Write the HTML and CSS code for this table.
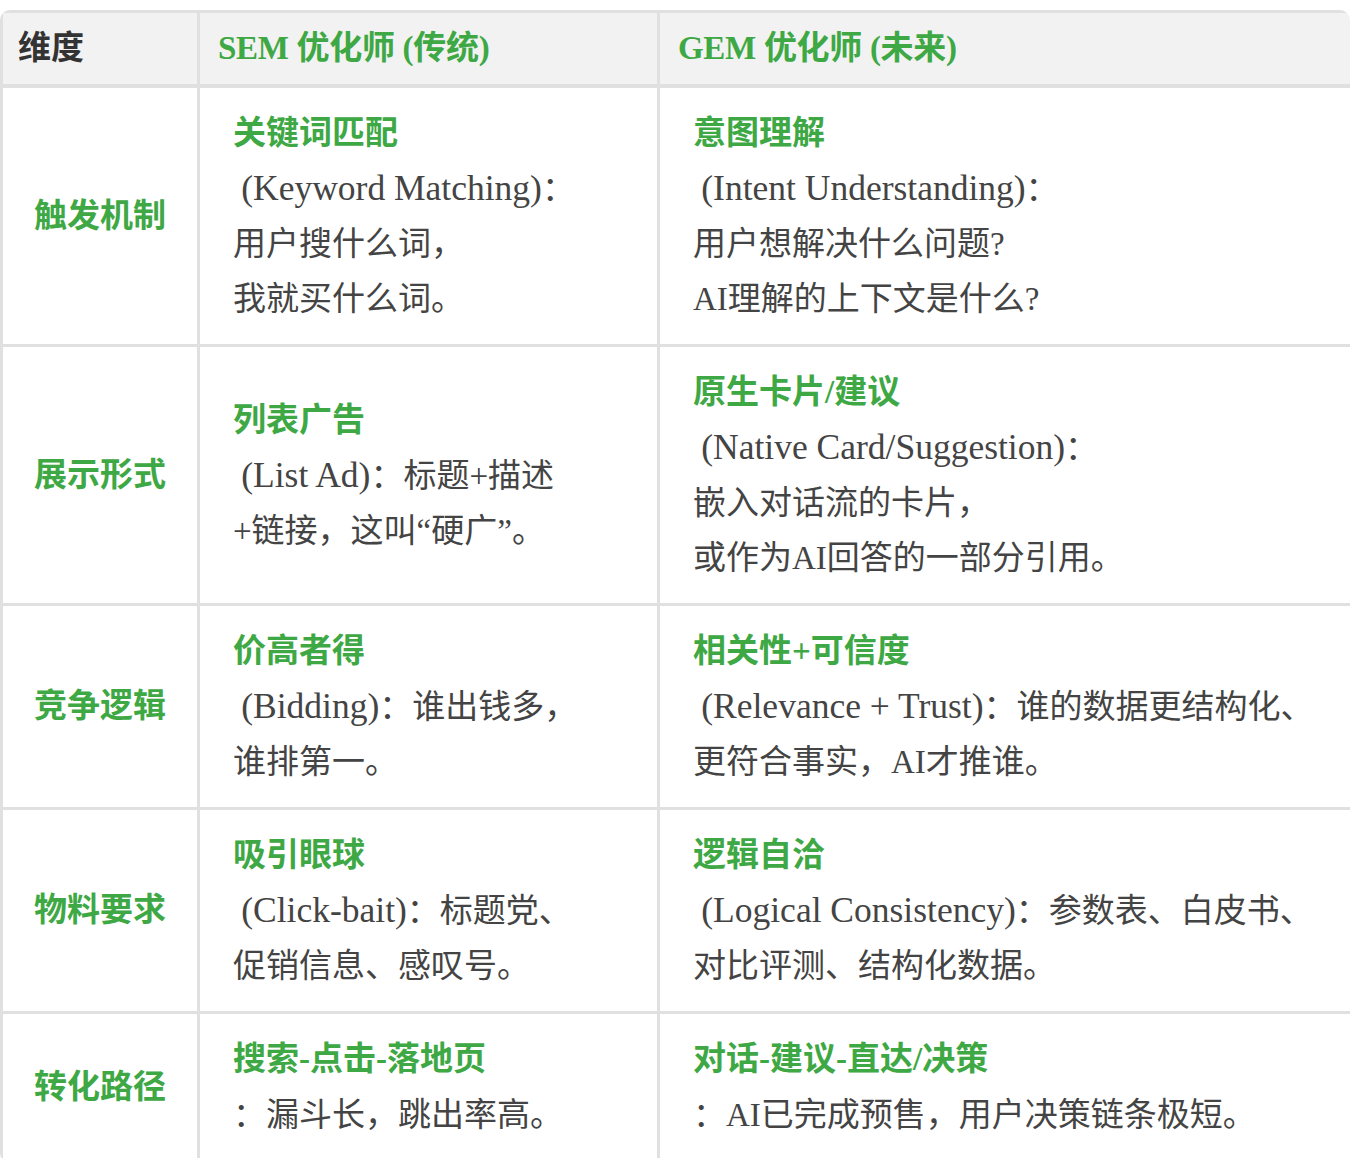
FILE: index.html
```html
<!DOCTYPE html>
<html lang="zh-CN">
<head>
<meta charset="utf-8">
<title>SEM vs GEM</title>
<link rel="stylesheet" href="styles.css">
</head>
<body>
<div class="wrap">
  <table class="cmp">
    <colgroup>
      <col class="c1"><col class="c2"><col class="c3">
    </colgroup>
    <thead>
      <tr>
        <th class="dim">维度</th>
        <th class="hl">SEM 优化师 (传统)</th>
        <th class="hl">GEM 优化师 (未来)</th>
      </tr>
    </thead>
    <tbody>
      <tr>
        <td class="key">触发机制</td>
        <td><div class="ttl">关键词匹配</div><div class="txt">&nbsp;<span class="en">(Keyword Matching)</span>：<br>用户搜什么词，<br>我就买什么词。</div></td>
        <td><div class="ttl">意图理解</div><div class="txt">&nbsp;<span class="en">(Intent Understanding)</span>：<br>用户想解决什么问题?<br>AI理解的上下文是什么?</div></td>
      </tr>
      <tr>
        <td class="key">展示形式</td>
        <td><div class="ttl">列表广告</div><div class="txt">&nbsp;<span class="en">(List Ad)</span>：标题+描述<br>+链接，这叫“硬广”。</div></td>
        <td><div class="ttl">原生卡片/建议</div><div class="txt">&nbsp;<span class="en">(Native Card/Suggestion)</span>：<br>嵌入对话流的卡片，<br>或作为AI回答的一部分引用。</div></td>
      </tr>
      <tr>
        <td class="key">竞争逻辑</td>
        <td><div class="ttl">价高者得</div><div class="txt">&nbsp;<span class="en">(Bidding)</span>：谁出钱多，<br>谁排第一。</div></td>
        <td><div class="ttl">相关性+可信度</div><div class="txt">&nbsp;<span class="en">(Relevance + Trust)</span>：谁的数据更结构化、<br>更符合事实，AI才推谁。</div></td>
      </tr>
      <tr>
        <td class="key">物料要求</td>
        <td><div class="ttl">吸引眼球</div><div class="txt">&nbsp;<span class="en">(Click-bait)</span>：标题党、<br>促销信息、感叹号。</div></td>
        <td><div class="ttl">逻辑自洽</div><div class="txt">&nbsp;<span class="en">(Logical Consistency)</span>：参数表、白皮书、<br>对比评测、结构化数据。</div></td>
      </tr>
      <tr>
        <td class="key">转化路径</td>
        <td><div class="ttl">搜索-点击-落地页</div><div class="txt">：漏斗长，跳出率高。</div></td>
        <td><div class="ttl">对话-建议-直达/决策</div><div class="txt">：AI已完成预售，用户决策链条极短。</div></td>
      </tr>
    </tbody>
  </table>
</div>
</body>
</html>
```
FILE: styles.css
```css
html, body {
  margin: 0;
  padding: 0;
  background: #ffffff;
}

body {
  font-family: "Liberation Serif", "Noto Sans CJK SC", serif;
  font-size: 33px;
  color: #444444;
}

.wrap {
  margin-top: 10px;
  width: 1350px;
  border-radius: 10px;
  overflow: hidden;
}

.cmp {
  border-collapse: separate;
  border-spacing: 0;
  table-layout: fixed;
  width: 1370px;
  border-top: 3px solid #e0e0e0;
  border-left: 3px solid #e0e0e0;
}

.c1 { width: 197px; }
.c2 { width: 460px; }
.c3 { width: 713px; }

.cmp th,
.cmp td {
  border-right: 3px solid #e0e0e0;
  border-bottom: 4px solid #e0e0e0;
  vertical-align: middle;
  text-align: left;
}

.cmp td {
  border-bottom-width: 3px;
}

.cmp th {
  background: #f2f2f2;
  font-weight: 700;
  line-height: 71px;
  padding: 0 18px;
  white-space: nowrap;
}

.cmp th.dim { color: #333333; padding-left: 15px; }
.cmp th.hl { color: #3ea845; letter-spacing: -0.3px; }

.cmp td {
  padding: 17px 32px 17px 33px;
  line-height: 55px;
  white-space: nowrap;
}

.cmp td.key {
  text-align: center;
  padding: 17px 0;
  color: #3ea845;
  font-weight: 700;
}

.ttl {
  color: #3ea845;
  font-weight: 700;
  line-height: 57px;
}

.txt {
  color: #444444;
}

.en {
  font-size: 35.5px;
  line-height: 1;
}
```
